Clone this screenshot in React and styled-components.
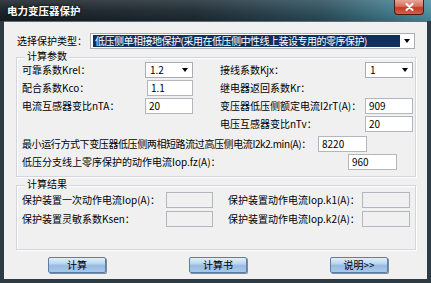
import React from 'react';
import styled, { createGlobalStyle } from 'styled-components';

const GlobalStyle = createGlobalStyle`
  html, body {
    margin: 0;
    padding: 0;
    background: #ffffff;
  }
  body {
    font-family: "Noto Sans CJK SC", "Noto Sans", sans-serif;
    font-size: 10px;
  }
`;

const Window = styled.div`
  width: 431px;
  height: 283px;
  display: flex;
  flex-direction: column;
  background: #2d3b45;
  box-sizing: border-box;
  overflow: hidden;
`;

const TitleBar = styled.div`
  height: 21px;
  flex: none;
  display: flex;
  justify-content: space-between;
  align-items: flex-start;
  background:
    linear-gradient(to bottom, rgba(255, 255, 255, 0.14) 0%, rgba(255, 255, 255, 0.04) 50%, rgba(0, 0, 0, 0.12) 100%),
    linear-gradient(to right, #161d22 0%, #1d2a32 45%, #2a4d5a 75%, #4a8fa2 100%);
`;

const Title = styled.div`
  margin: 4px 0 0 7px;
  color: #ffffff;
  font-weight: bold;
  font-size: 10.5px;
  line-height: 13px;
  text-shadow: 0 0 3px rgba(0, 0, 0, 0.9);
`;

const CloseButton = styled.div`
  width: 30px;
  height: 15px;
  margin-right: 7px;
  box-sizing: border-box;
  border: 1px solid #4e1a12;
  border-top: none;
  border-radius: 0 0 4px 4px;
  background: linear-gradient(to bottom, #eaa596 0%, #d7705e 45%, #c13b24 55%, #d2624b 100%);
  display: flex;
  align-items: center;
  justify-content: center;
`;

const Client = styled.div`
  flex: 1;
  margin: 0 4px 4px 4px;
  background: #f0f0f0;
  border-top: 1px solid #5d6c76;
  padding: 11px 11px 0 12px;
  display: flex;
  flex-direction: column;
  color: #000;
`;

const TypeRow = styled.div`
  display: flex;
  align-items: center;
  height: 16px;
  padding-left: 1px;
`;

const Label = styled.div`
  width: ${(p) => p.$w || 'auto'};
  flex: none;
  font-size: 10px;
  line-height: 12px;
  white-space: nowrap;
  letter-spacing: ${(p) => (p.$tight ? '-0.4px' : '0')};
`;

const Combo = styled.div`
  width: ${(p) => p.$w}px;
  height: 16px;
  box-sizing: border-box;
  border: 1px solid #a9acb2;
  background: #ffffff;
  display: flex;
  align-items: center;
  padding: 1px 0 1px 2px;
`;

const Selection = styled.div`
  flex: 1;
  min-width: 0;
  height: 12px;
  background: #0f2f5f;
  color: #ffffff;
  font-size: 10px;
  line-height: 12px;
  padding-left: 2px;
  letter-spacing: -0.5px;
  white-space: nowrap;
`;

const ComboValue = styled.div`
  flex: 1;
  font-size: 10px;
  line-height: 12px;
  padding-left: 2px;
`;

const Arrow = styled.div`
  width: 14px;
  display: flex;
  justify-content: center;
  &::after {
    content: '';
    border-left: 3.5px solid transparent;
    border-right: 3.5px solid transparent;
    border-top: 4px solid #000;
  }
`;

const TextBox = styled.div`
  width: ${(p) => p.$w || 48}px;
  height: ${(p) => p.$h || 16}px;
  box-sizing: border-box;
  border: 1px solid #b3b7bd;
  background: ${(p) => (p.$empty ? '#f0f0f0' : '#ffffff')};
  font-size: 10px;
  line-height: 13px;
  padding-left: 3px;
  margin-left: ${(p) => p.$ml || 0}px;
`;

const Group = styled.div`
  margin-top: ${(p) => p.$mt}px;
  border: 1px solid #d2d6da;
  box-shadow: inset 1px 1px 0 #ffffff, 1px 1px 0 #ffffff;
  padding: 0 0 ${(p) => p.$pb}px 5px;
  display: flex;
  flex-direction: column;
`;

const GroupTitle = styled.div`
  align-self: flex-start;
  margin: -7px 0 ${(p) => p.$mb}px 3px;
  padding: 0 2px;
  background: #f0f0f0;
  font-size: 10px;
  line-height: 10px;
`;

const ParamGrid = styled.div`
  display: grid;
  grid-template-columns: 123px 48px 27px 145px 48px;
  grid-auto-rows: 16px;
  row-gap: 2px;
  align-items: center;
`;

const Cell = styled.div`
  grid-column: ${(p) => p.$col};
`;

const WideRow = styled.div`
  display: flex;
  align-items: center;
  height: 16px;
  margin-top: ${(p) => p.$mt}px;
`;

const ResultGrid = styled.div`
  display: grid;
  grid-template-columns: 144px 47px 15px 134px 48px;
  grid-auto-rows: 16px;
  row-gap: 3px;
  align-items: center;
`;

const ButtonRow = styled.div`
  display: flex;
  gap: 83px;
  padding-left: 32px;
  margin-top: 7px;
`;

const Button = styled.div`
  width: 58px;
  height: 16px;
  box-sizing: border-box;
  border: 1px solid #5b7ea8;
  border-radius: 2px;
  background: linear-gradient(to bottom, #e3eefa 0%, #bcd5ef 40%, #97bbe2 55%, #a9c9ec 100%);
  box-shadow: 1px 1px 0 #7e8a96;
  font-size: 10px;
  line-height: 14px;
  text-align: center;
  color: #000;
`;

function CloseIcon() {
  return (
    <svg width="9" height="8" viewBox="0 0 9 8">
      <path d="M1.5 1 L7.5 7 M7.5 1 L1.5 7" stroke="#ffffff" strokeWidth="2" strokeLinecap="round" />
    </svg>
  );
}

export default function App() {
  return (
    <>
      <GlobalStyle />
      <Window>
        <TitleBar>
          <Title>电力变压器保护</Title>
          <CloseButton>
            <CloseIcon />
          </CloseButton>
        </TitleBar>
        <Client>
          <TypeRow>
            <Label $w="73px">选择保护类型：</Label>
            <Combo $w={325}>
              <Selection>低压侧单相接地保护(采用在低压侧中性线上装设专用的零序保护)</Selection>
              <Arrow />
            </Combo>
          </TypeRow>

          <Group $mt={8} $pb={6}>
            <GroupTitle $mb={1}>计算参数</GroupTitle>
            <ParamGrid>
              <Label>可靠系数Krel：</Label>
              <Combo $w={48}>
                <ComboValue>1.2</ComboValue>
                <Arrow />
              </Combo>
              <Cell $col="4">
                <Label>接线系数Kjx：</Label>
              </Cell>
              <Combo $w={48}>
                <ComboValue>1</ComboValue>
                <Arrow />
              </Combo>

              <Label>配合系数Kco：</Label>
              <TextBox $w={46} $ml={2}>1.1</TextBox>
              <Cell $col="4 / span 2">
                <Label>继电器返回系数Kr：</Label>
              </Cell>

              <Label>电流互感器变比nTA：</Label>
              <TextBox>20</TextBox>
              <Cell $col="4">
                <Label>变压器低压侧额定电流I2rT(A)：</Label>
              </Cell>
              <TextBox>909</TextBox>

              <Cell $col="4">
                <Label>电压互感器变比nTv：</Label>
              </Cell>
              <TextBox>20</TextBox>
            </ParamGrid>
            <WideRow $mt={4}>
              <Label $w="296px" $tight>最小运行方式下变压器低压侧两相短路流过高压侧电流I2k2.min(A)：</Label>
              <TextBox $w={49}>8220</TextBox>
            </WideRow>
            <WideRow $mt={2}>
              <Label $w="326px">低压分支线上零序保护的动作电流Iop.fz(A)：</Label>
              <TextBox $w={49}>960</TextBox>
            </WideRow>
          </Group>

          <Group $mt={8} $pb={22}>
            <GroupTitle $mb={3}>计算结果</GroupTitle>
            <ResultGrid>
              <Label>保护装置一次动作电流Iop(A)：</Label>
              <TextBox $w={47} $empty />
              <Cell $col="4">
                <Label>保护装置动作电流Iop.k1(A)：</Label>
              </Cell>
              <TextBox $empty />

              <Label>保护装置灵敏系数Ksen：</Label>
              <TextBox $w={47} $empty />
              <Cell $col="4">
                <Label>保护装置动作电流Iop.k2(A)：</Label>
              </Cell>
              <TextBox $empty />
            </ResultGrid>
          </Group>

          <ButtonRow>
            <Button>计算</Button>
            <Button>计算书</Button>
            <Button>说明&gt;&gt;</Button>
          </ButtonRow>
        </Client>
      </Window>
    </>
  );
}
